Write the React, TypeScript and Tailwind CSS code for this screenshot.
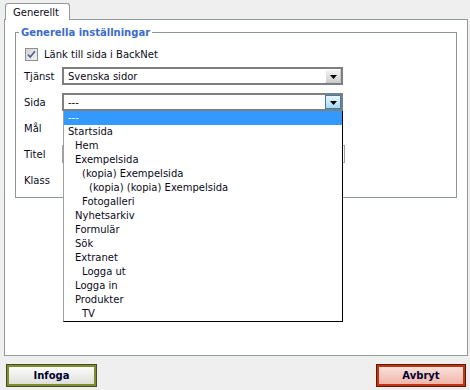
import { ReactNode } from 'react'

const pages = [
  { label: '---', level: 0, active: true },
  { label: 'Startsida', level: 0 },
  { label: 'Hem', level: 1 },
  { label: 'Exempelsida', level: 1 },
  { label: '(kopia) Exempelsida', level: 2 },
  { label: '(kopia) (kopia) Exempelsida', level: 3 },
  { label: 'Fotogalleri', level: 2 },
  { label: 'Nyhetsarkiv', level: 1 },
  { label: 'Formulär', level: 1 },
  { label: 'Sök', level: 1 },
  { label: 'Extranet', level: 1 },
  { label: 'Logga ut', level: 2 },
  { label: 'Logga in', level: 1 },
  { label: 'Produkter', level: 1 },
  { label: 'TV', level: 2 },
]

const indent = ['pl-[4px]', 'pl-[11px]', 'pl-[18px]', 'pl-[25px]']

const Arrow = () => (
  <svg width="7" height="4" viewBox="0 0 7 4">
    <polygon points="0,0 7,0 3.5,4" fill="#000" />
  </svg>
)

const Select = ({ value, open, children }: { value: string; open?: boolean; children?: ReactNode }) => (
  <div className="relative flex h-[18px] w-[281px] items-center border-2 border-[#7f7f7f] bg-white">
    <span className="flex-1 pl-[4px]">{value}</span>
    {open ? (
      <div className="flex h-[14px] w-[16px] items-center justify-center border border-[#3c7fb1] bg-linear-to-b from-[#eaf6fd] to-[#a7d9f5] pt-[2px]">
        <Arrow />
      </div>
    ) : (
      <div className="flex h-[14px] w-[16px] items-center justify-center border border-t-white border-l-white border-r-[#c8c8c8] border-b-[#c8c8c8] bg-linear-to-b from-[#f4f4f4] to-[#d0d0d0] pt-[2px]">
        <Arrow />
      </div>
    )}
    {children}
  </div>
)

const Row = ({ label, children }: { label: string; children: ReactNode }) => (
  <div className="flex h-[18px] items-center">
    <span className="w-[38px]">{label}</span>
    {children}
  </div>
)

const App = () => {
  return (
    <div className="h-[390px] w-[470px] bg-[#efefef] text-[10px] text-[#0a0a1a]" style={{ fontFamily: '"DejaVu Sans", Verdana, sans-serif' }}>
      {/* flik */}
      <div className="pl-[5px] pt-[3px]">
        <div className="relative -mb-px flex h-[17px] w-[65px] items-center rounded-t-[3px] border border-b-0 border-[#919b9c] bg-white pl-[7px]">
          Generellt
        </div>
      </div>

      {/* panel */}
      <div className="ml-[4px] mr-[2px] h-[337px] border border-[#919b9c] bg-white pt-[6px]">
        <fieldset className="mx-[10px] border border-[#8c9798] pb-[8px]">
          <legend className="ml-[3px] px-[2px] font-bold leading-[13px] text-[#3a6cc8]">Generella inställningar</legend>
          <div className="flex flex-col gap-[8px] pl-[8px] pt-[9px]">
            <div className="mb-[-2px] flex h-[13px] items-center">
              <svg className="ml-[1px]" width="13" height="13" viewBox="0 0 13 13">
                <defs>
                  <linearGradient id="cb" x1="0" y1="0" x2="1" y2="1">
                    <stop offset="0" stopColor="#d2d2d2" />
                    <stop offset="1" stopColor="#f4f4f4" />
                  </linearGradient>
                </defs>
                <rect x="0.5" y="0.5" width="12" height="12" fill="url(#cb)" stroke="#8e8f8f" />
                <path d="M3 6.5 L5.2 9 L10 3.2" fill="none" stroke="#4b5f95" strokeWidth="1.6" />
              </svg>
              <span className="ml-[6px]">Länk till sida i BackNet</span>
            </div>

            <Row label="Tjänst">
              <Select value="Svenska sidor" />
            </Row>

            <Row label="Sida">
              <Select value="---" open>
                {/* öppen lista */}
                <div className="absolute left-[-1px] top-[16px] z-10 w-[280px] border-b border-l border-r border-b-black border-l-[#a0a0a0] border-r-black bg-white">
                  {pages.map((p) => (
                    <div
                      key={p.label}
                      className={`h-[14px] whitespace-pre leading-[14px] ${indent[p.level]} ${p.active ? 'bg-[#3399ff] text-white' : ''}`}
                    >
                      {p.label}
                    </div>
                  ))}
                </div>
              </Select>
            </Row>

            <Row label="Mål">
              <div className="ml-[2px] h-[18px] w-[278px] border border-[#a0a0a0]" />
            </Row>

            <Row label="Titel">
              <div className="h-[18px] w-[283px] border border-[#a0a0a0] bg-white" />
            </Row>

            <Row label="Klass">
              <div className="ml-[2px] h-[18px] w-[278px] border border-[#a0a0a0]" />
            </Row>
          </div>
        </fieldset>
      </div>

      {/* knappar */}
      <div className="mt-[8px] flex justify-between pl-[6px] pr-[4px]">
        <button className="h-[23px] w-[91px] border border-[#474a2c] bg-linear-to-b from-white to-[#dcdcd6] font-bold text-[#000033] shadow-[inset_0_0_0_2px_#7f8e2a]">
          Infoga
        </button>
        <button className="h-[23px] w-[90px] border border-[#5c1a0c] bg-linear-to-b from-[#fbe6e1] to-[#eeb0a4] font-bold text-[#000033] shadow-[inset_0_0_0_2px_#c2330f]">
          Avbryt
        </button>
      </div>
    </div>
  )
}

export default App
